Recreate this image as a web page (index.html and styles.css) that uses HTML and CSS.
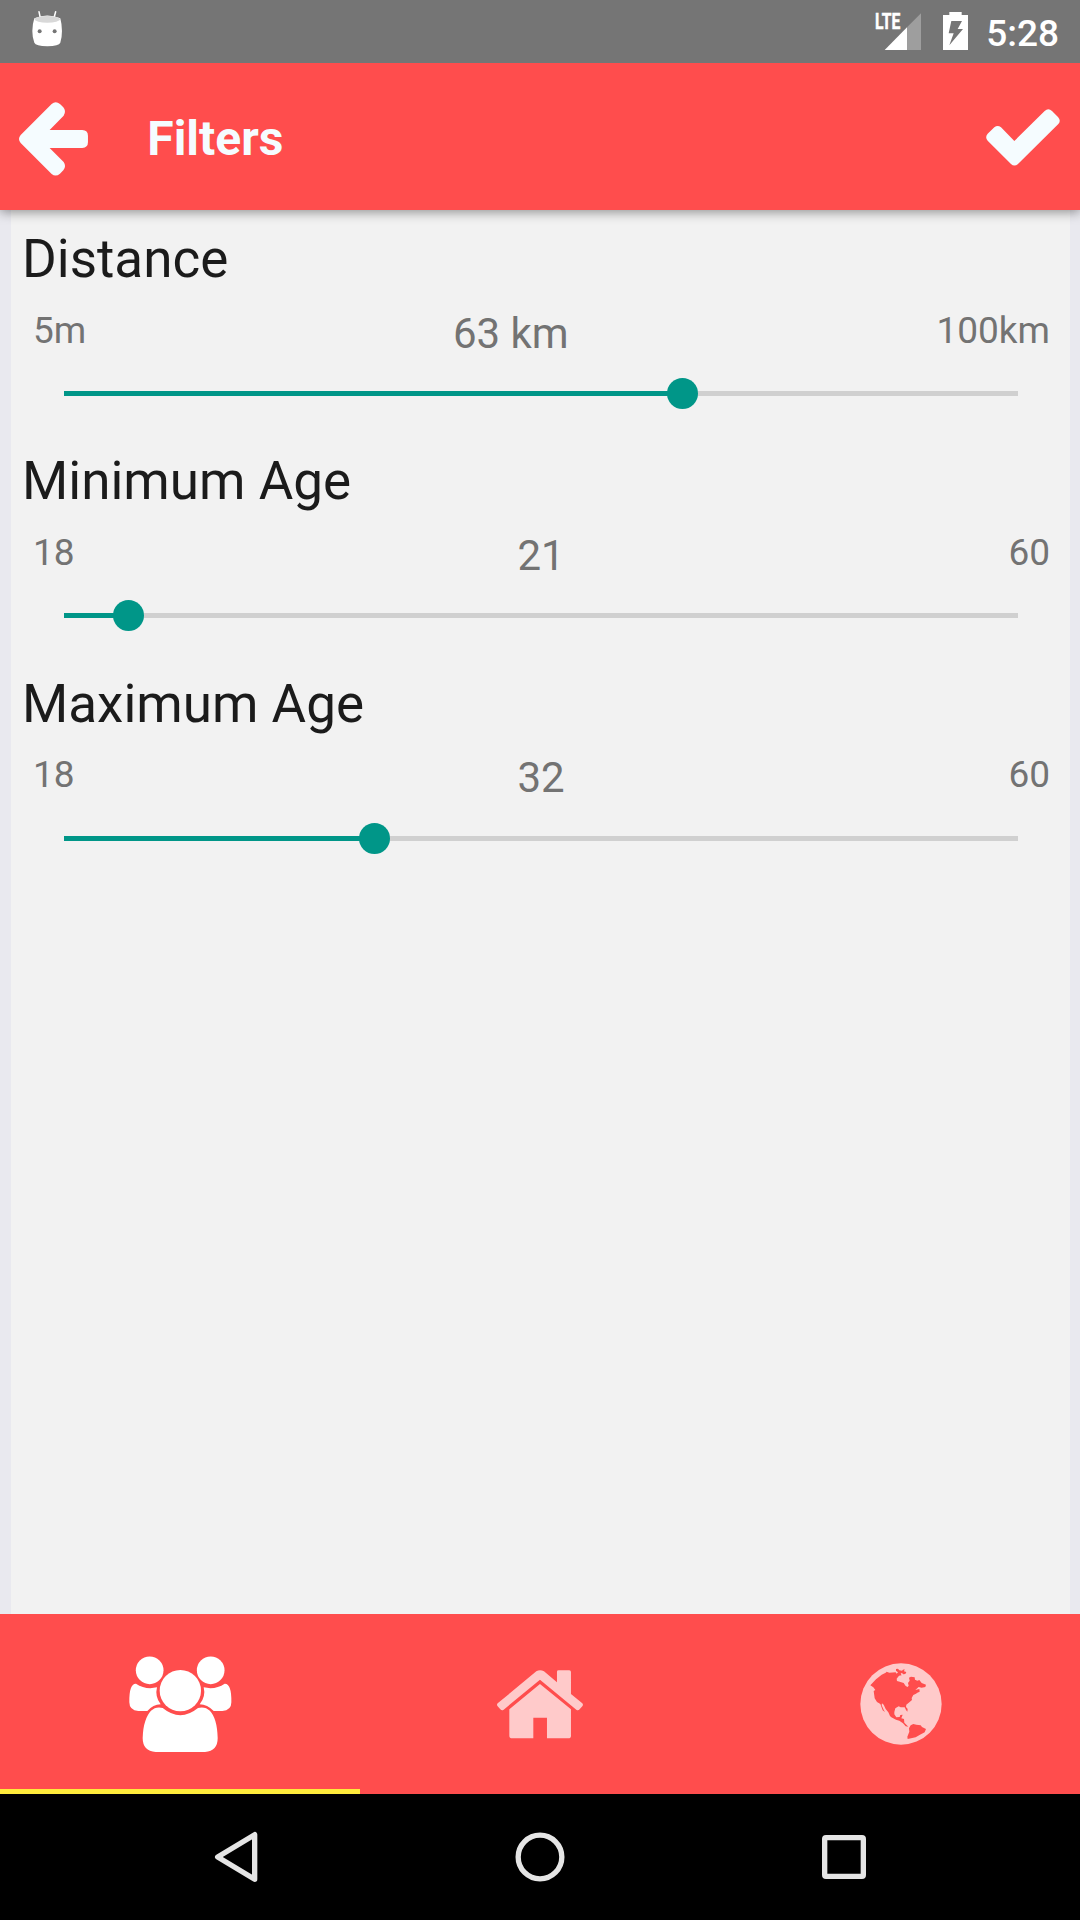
FILE: index.html
```html
<!DOCTYPE html>
<html lang="en">
<head>
<meta charset="utf-8">
<title>Filters</title>
<link rel="stylesheet" href="styles.css">
</head>
<body>
<div class="screen">
  <div class="status-bar">
    <svg class="android-icon" viewBox="0 0 100 110" aria-hidden="true">
      <path d="M24 5l4 19M74 5l-5 19" stroke="#fff" stroke-width="4.5" stroke-linecap="round"/>
      <path d="M10 25Q49 8 88 25Q93 43 93 63Q93 84 88 98Q84 108 49 109Q14 108 10 98Q4 84 4 63Q4 43 10 25Z" fill="#fff"/>
      <ellipse cx="49" cy="28" rx="38" ry="10" fill="#d8d8d8"/>
      <circle cx="26" cy="64" r="6" fill="#757575"/><circle cx="71" cy="64" r="6" fill="#757575"/>
    </svg>
    <div class="status-right">
      <svg class="signal-icon" viewBox="0 0 137 111" aria-hidden="true">
        <path d="M135 1V111H93V43Z" fill="#9e9e9e"/>
        <path d="M93 43V111H26Z" fill="#fff"/>
        <text class="lte" x="-3" y="49" textLength="76" lengthAdjust="spacingAndGlyphs">LTE</text>
      </svg>
      <svg class="battery-icon" viewBox="0 0 75 114" aria-hidden="true">
        <path d="M19 0H56V9H75V114H0V9H19Z" fill="#fff"/>
        <path d="M25 27H57L44 51H60L19 100L32 64H17Z" fill="#757575"/>
      </svg>
      <span class="clock">5:28</span>
    </div>
  </div>

  <header class="app-bar">
    <svg class="back-icon" viewBox="0 0 208 222" aria-label="Back">
      <path d="M98 6Q110-5 123 6L133 16Q143 28 134 41L92 84H190Q207 85 207 101V121Q207 137 190 138H92L134 180Q143 193 133 205L123 215Q110 226 98 216L5 123Q-5 111 5 99Z"/>
    </svg>
    <h1 class="app-title">Filters</h1>
    <svg class="check-icon" viewBox="0 0 222 170" aria-label="Apply">
      <path d="M5 74L25 55Q35 47 45 55L85 96L176 6Q187-4 198 6L216 24Q226 35 217 45L96 165Q85 174 75 165L5 95Q-4 85 5 74Z"/>
    </svg>
  </header>

  <main class="content">
    <section class="filter">
      <h2 class="filter-title">Distance</h2>
      <div class="labels"><span>5m</span><span class="value">63 km</span><span>100km</span></div>
      <div class="track"><div class="fill" style="width:618.5px"></div></div>
    </section>
    <section class="filter">
      <h2 class="filter-title">Minimum Age</h2>
      <div class="labels"><span>18</span><span class="value">21</span><span>60</span></div>
      <div class="track"><div class="fill" style="width:64.5px"></div></div>
    </section>
    <section class="filter">
      <h2 class="filter-title">Maximum Age</h2>
      <div class="labels"><span>18</span><span class="value">32</span><span>60</span></div>
      <div class="track"><div class="fill" style="width:310.5px"></div></div>
    </section>
  </main>

  <nav class="tabs">
    <div class="tab active">
      <svg class="people-icon" viewBox="86 167 308 290" aria-hidden="true">
        <circle cx="148" cy="210" r="41.5"/><circle cx="331" cy="210" r="41.5"/>
        <circle cx="240" cy="271" r="62"/>
        <path d="M107 250Q135 269 170 261Q163 289 181 312Q158 313 141 332H114Q87 330 87 306Q86 249 107 250Z"/>
        <path d="M373 250Q345 269 310 261Q317 289 298 312Q321 313 340 332H366Q393 330 393 306Q394 249 373 250Z"/>
        <path d="M187 323Q240 366 293 323Q330 314 345 362Q351 382 352 413Q352 452 314 455H166Q127 452 127 413Q128 382 135 362Q151 314 187 323Z"/>
      </svg>
    </div>
    <div class="tab">
      <svg class="home-icon" viewBox="111 89 259 206" aria-hidden="true">
        <path d="M229 93Q240 86 252 93L291 126V94Q291 90 296 90H328Q333 90 333 95V161L367 189Q371 193 367 198L359 207Q354 212 349 208L240 118L131 208Q126 212 121 207L113 198Q109 193 113 189Z"/>
        <path d="M240 131L333 207V287Q333 294 325 294H261V232H220V294H157Q148 294 148 286V207Z"/>
      </svg>
    </div>
    <div class="tab">
      <svg class="globe-icon" viewBox="59 69 246 246" aria-hidden="true">
        <circle cx="182" cy="192" r="122"/>
        <path class="land" d="M90 136L107 118L124 104L136 98L139 95L147 98L166 97L169 101L173 97L167 92V87L173 86L177 91L185 92L188 89L193 88L191 94L198 96L195 102L188 103L185 98L181 101L184 106L176 107L169 116L170 123L178 125L190 129L196 138L202 141L205 137L203 129L208 122L206 113L212 110L223 112L224 119L231 122L237 120L244 129L257 134L255 141L244 143L235 141L225 150L237 147L238 155L231 158L227 161L219 165L214 174L215 180L208 186L198 194L197 201L202 207L201 215L197 210L193 202L181 202L175 199L165 205L162 216L162 223L168 232L178 231L180 225L187 224L183 235L191 237L192 248L204 260L196 259L188 250L177 242L167 239L153 232L149 228L144 217L136 207L130 194L125 190L124 196L130 209L134 216L127 211L120 192L110 186L103 175L100 153L105 150L99 142Z"/>
        <path class="land" d="M211 256L219 252L228 254L241 256L245 261L257 267L253 277L239 284L226 292L202 297L201 290L207 275L206 265Z"/>
      </svg>
    </div>
  </nav>

  <div class="system-nav">
    <svg class="sys-icon" viewBox="0 0 150 150" aria-hidden="true"><path d="M131 8V142L20 75Z"/></svg>
    <svg class="sys-icon" viewBox="0 0 150 150" aria-hidden="true"><circle cx="75" cy="75" r="65.500"/></svg>
    <svg class="sys-icon" viewBox="0 0 150 150" aria-hidden="true"><rect x="17" y="17" width="116" height="116" rx="4"/></svg>
  </div>
</div>
</body>
</html>
```
FILE: styles.css
```css
* { box-sizing: border-box; margin: 0; }
body { font-family: Roboto, "Liberation Sans", sans-serif; }
svg { display: block; flex: none; overflow: visible; }

.screen {
  width: 1080px;
  height: 1920px;
  display: flex;
  flex-direction: column;
  background: #e9e9ef;
  overflow: hidden;
}

.status-bar {
  height: 63px;
  flex: none;
  display: flex;
  justify-content: space-between;
  padding: 0 21px 0 31px;
  background: #757575;
  position: relative;
  z-index: 2;
}
.android-icon { width: 33.300px; height: 36.700px; margin-top: 10px; fill: none; }
.status-right { display: flex; align-items: flex-start; color: #fff; }
.signal-icon { width: 45.700px; height: 37px; margin: 13px 21px 0 0; }
.lte { font-size: 66px; font-weight: 700; fill: #fff; stroke: #fff; stroke-width: 1.500px; }
.battery-icon { width: 25px; height: 38px; margin: 12px 18.500px 0 0; }
.clock { font-size: 37px; font-weight: 500; line-height: 43px; margin-top: 12px; }

.app-bar {
  height: 147px;
  flex: none;
  display: flex;
  align-items: center;
  padding: 0 20px 0 19px;
  background: #ff4d4d;
  box-shadow: 0 2px 11px rgba(0, 0, 0, .42);
  position: relative;
}
.app-bar svg { fill: #f5fcff; }
.back-icon { width: 69.300px; height: 74px; margin-top: 4px; }
.app-title { flex: 1; margin: 4px 0 0 59px; font-size: 48px; line-height: 56px; font-weight: 700; color: #f5fcff; }
.check-icon { width: 74px; height: 56.700px; margin-top: 2px; }

.content {
  flex: 1;
  margin: 0 10px 0 11px;
  padding-top: 18px;
  background: #f2f2f2;
}
.filter { height: 222px; }
.filter-title {
  padding-left: 11px;
  font-size: 53px;
  line-height: 62px;
  font-weight: 400;
  color: #1b1b1b;
}
.labels {
  height: 49px;
  margin: 19px 20px 0 22px;
  display: flex;
  justify-content: space-between;
  align-items: flex-start;
  font-size: 37px;
  line-height: 43px;
  color: #737373;
}
.value { margin-right: 1px; font-size: 42px; line-height: 49px; }
.track { height: 5px; margin: 33px 52px 0 53px; background: #d0d0d0; }
.filter:last-child .filter-title { padding-top: 1px; }
.filter:last-child .labels { margin-top: 18px; }
.filter:last-child .track { margin-top: 34px; }
.fill { height: 5px; background: #009688; position: relative; }
.fill::after {
  content: "";
  position: absolute;
  right: -15.500px;
  top: -13px;
  width: 31px;
  height: 31px;
  border-radius: 50%;
  background: #009688;
}

.tabs { height: 180px; flex: none; display: flex; background: #ff4d4d; }
.tab {
  flex: 1;
  display: flex;
  justify-content: center;
  align-items: center;
  border-bottom: 5px solid transparent;
  fill: #ffcaca;
}
.tab.active { border-color: #ffeb3b; fill: #fff; }
.people-icon { width: 102.700px; height: 96.700px; margin-top: 5px; }
.home-icon { width: 86.300px; height: 68.700px; margin-top: 5px; }
.globe-icon { width: 82px; height: 82px; margin: 5px 0 0 1px; }
.land { fill: #ff4d4d; }

.system-nav {
  height: 126px;
  flex: none;
  display: flex;
  justify-content: center;
  align-items: center;
  gap: 254px;
  background: #000;
}
.sys-icon { width: 50px; height: 50px; fill: none; stroke: #e5e5e5; stroke-width: 16; stroke-linejoin: round; }
```
